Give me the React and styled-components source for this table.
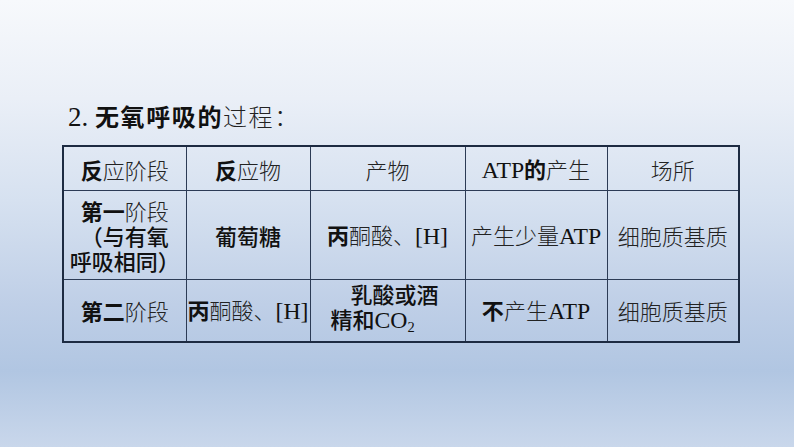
import styled, { createGlobalStyle } from "styled-components";

const GlobalStyle = createGlobalStyle`
  html, body {
    margin: 0;
    padding: 0;
  }
  body {
    font-family: "Noto Sans CJK SC", "Liberation Sans", sans-serif;
    color: #111;
  }
`;

const rows = [
  {
    stage: [[["b", "第一"], ["s", "阶段"]], [["h", "（与有氧"]], [["h", "呼吸相同）"]]],
    input: [[["h", "葡萄糖"]]],
    output: [[["b", "丙"], ["s", "酮酸、"], ["r", "[H]"]]],
    atp: [[["s", "产生少量"], ["r", "ATP"]]],
    place: [[["s", "细胞质基质"]]],
    tall: true,
  },
  {
    stage: [[["b", "第二"], ["s", "阶段"]]],
    input: [[["b", "丙"], ["s", "酮酸、"], ["r", "[H]"]]],
    output: [[["h", "乳酸或酒"]], [["h", "精和"], ["r", "CO"], ["sub", "2"]]],
    atp: [[["b", "不"], ["s", "产生"], ["r", "ATP"]]],
    place: [[["s", "细胞质基质"]]],
  },
];

function Runs({ lines }) {
  return lines.map((line, i) => (
    <Line key={i}>
      {line.map(([kind, text], j) => {
        if (kind === "b") return <Hei key={j}>{text}</Hei>;
        if (kind === "h") return <Hei key={j} $light>{text}</Hei>;
        if (kind === "s") return <Song key={j}>{text}</Song>;
        if (kind === "sub") return <Sub key={j}>{text}</Sub>;
        return <Roman key={j}>{text}</Roman>;
      })}
    </Line>
  ));
}

export default function App() {
  return (
    <Slide>
      <GlobalStyle />
      <Title>
        <Roman>2. </Roman>
        <Hei>无氧呼吸的</Hei>
        <Song>过程：</Song>
      </Title>
      <Table>
        <colgroup>
          <col style={{ width: 123 }} />
          <col style={{ width: 124 }} />
          <col style={{ width: 155 }} />
          <col style={{ width: 142 }} />
          <col style={{ width: 132 }} />
        </colgroup>
        <thead>
          <tr>
            <Head>
              <Hei>反</Hei>
              <Song>应阶段</Song>
            </Head>
            <Head>
              <Hei>反</Hei>
              <Song>应物</Song>
            </Head>
            <Head>
              <Song>产物</Song>
            </Head>
            <Head>
              <Roman>ATP</Roman>
              <Hei>的</Hei>
              <Song>产生</Song>
            </Head>
            <Head>
              <Song>场所</Song>
            </Head>
          </tr>
        </thead>
        <tbody>
          {rows.map((r, i) => (
            <Row key={i} $tall={r.tall}>
              <Cell>
                <Runs lines={r.stage} />
              </Cell>
              <Cell>
                <Runs lines={r.input} />
              </Cell>
              <Cell $indent={r.output.length > 1}>
                <Runs lines={r.output} />
              </Cell>
              <Cell>
                <Runs lines={r.atp} />
              </Cell>
              <Cell>
                <Runs lines={r.place} />
              </Cell>
            </Row>
          ))}
        </tbody>
      </Table>
    </Slide>
  );
}

const Slide = styled.div`
  width: 794px;
  height: 447px;
  box-sizing: border-box;
  padding: 102px 0 0 62px;
  overflow: hidden;
  background: linear-gradient(
    180deg,
    #f7f9fc 0%,
    #eaeff7 22%,
    #d6e1f0 45%,
    #bfcfe7 68%,
    #b1c6e2 83%,
    #c9d7eb 100%
  );
`;

const Title = styled.h1`
  margin: 0 0 14px 6px;
  font-size: 24px;
  font-weight: 400;
  letter-spacing: 1.6px;
  line-height: 28px;
  color: #111;

  & > span:first-child {
    font-size: 27px;
    letter-spacing: 0;
  }
`;

const Hei = styled.span`
  font-family: "Noto Sans CJK SC", sans-serif;
  font-weight: ${(p) => (p.$light ? 500 : 700)};
`;

const Song = styled.span`
  font-family: "Noto Sans CJK SC", sans-serif;
  font-weight: 300;
  color: #222;
`;

const Roman = styled.span`
  font-family: "Liberation Serif", serif;
  font-weight: 400;
  font-size: 1.08em;
`;

const Sub = styled.sub`
  font-family: "Liberation Serif", serif;
  font-size: 0.66em;
  vertical-align: -0.25em;
`;

const Table = styled.table`
  border-collapse: collapse;
  table-layout: fixed;
  width: 676px;
  border: 2px solid #1d2b42;
  font-size: 22px;
`;

const Head = styled.th`
  height: 43px;
  padding: 0;
  font-weight: 400;
  text-align: center;
  vertical-align: middle;
  line-height: 26px;
  border: 1.5px solid #2c3b55;
`;

const Row = styled.tr`
  height: ${(p) => (p.$tall ? 89 : 62)}px;
`;

const Cell = styled.td`
  padding: ${(p) => (p.$indent ? "0 0 0 20px" : "0")};
  text-align: ${(p) => (p.$indent ? "left" : "center")};
  vertical-align: middle;
  line-height: 25px;
  border: 1.5px solid #2c3b55;
  white-space: nowrap;

  & > div:first-child {
    padding-left: ${(p) => (p.$indent ? "20px" : "0")};
  }
`;

const Line = styled.div`
  display: block;
`;
